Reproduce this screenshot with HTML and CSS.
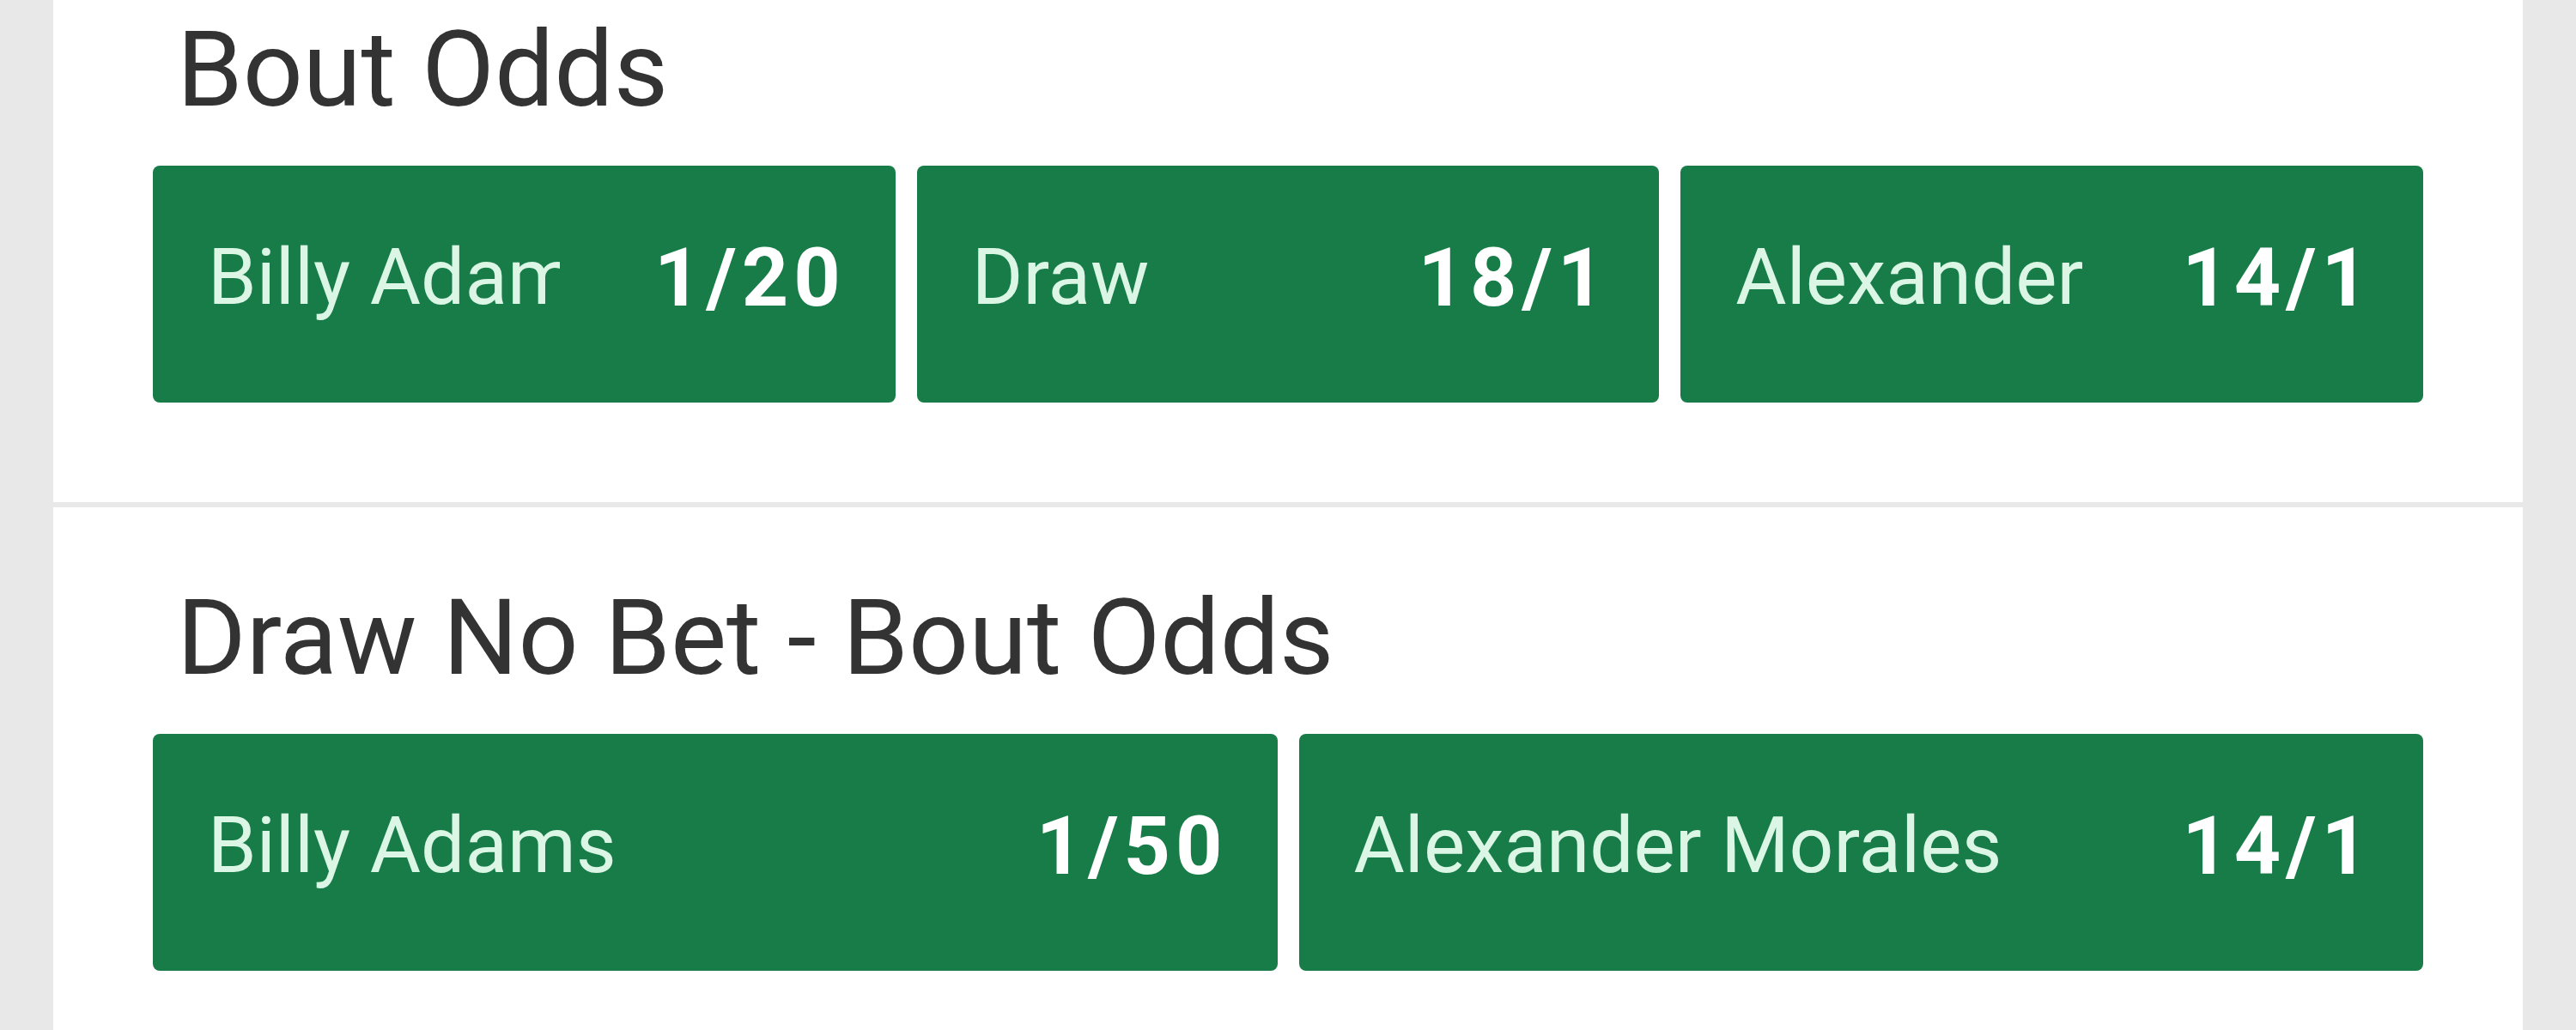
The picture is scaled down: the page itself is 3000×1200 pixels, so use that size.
FILE: index.html
```html
<!DOCTYPE html>
<html lang="en">
<head>
<meta charset="utf-8">
<title>Bout Odds</title>
<link rel="stylesheet" href="styles.css">
</head>
<body>
<main class="page">
  <section class="market market--first">
    <h2 class="market-title">Bout Odds</h2>
    <div class="selections selections--three">
      <button class="selection"><span class="selection-name">Billy Adams</span><span class="selection-odds">1/20</span></button>
      <button class="selection"><span class="selection-name">Draw</span><span class="selection-odds">18/1</span></button>
      <button class="selection"><span class="selection-name">Alexander Morales</span><span class="selection-odds">14/1</span></button>
    </div>
  </section>
  <section class="market">
    <h2 class="market-title">Draw No Bet - Bout Odds</h2>
    <div class="selections selections--two">
      <button class="selection"><span class="selection-name">Billy Adams</span><span class="selection-odds">1/50</span></button>
      <button class="selection"><span class="selection-name">Alexander Morales</span><span class="selection-odds">14/1</span></button>
    </div>
  </section>
</main>
</body>
</html>
```

FILE: styles.css
```css
html, body {
  margin: 0;
  padding: 0;
}

body {
  background: #e8e8e8;
  font-family: Roboto, "Noto Sans", "Liberation Sans", sans-serif;
}

.page {
  margin: 0 62px;
  display: flex;
  flex-direction: column;
  gap: 6px;
}

.market {
  background: #ffffff;
  padding: 79px 116px 116px;
}

.market--first {
  padding-top: 8px;
}

.market-title {
  margin: 0 0 39px 28px;
  font-size: 123px;
  line-height: 146px;
  font-weight: 400;
  color: #333333;
}

.selections {
  display: grid;
  gap: 25px;
}

.selections--three {
  grid-template-columns: repeat(3, 1fr);
}

.selections--two {
  grid-template-columns: repeat(2, 1fr);
}

.selection {
  display: flex;
  align-items: center;
  height: 276px;
  padding: 0 58px 16px 64px;
  border: none;
  border-radius: 8px;
  background: #177c48;
  font-family: inherit;
  text-align: left;
  min-width: 0;
  box-sizing: border-box;
}

.selection-name {
  flex: 1;
  min-width: 0;
  overflow: hidden;
  white-space: nowrap;
  font-size: 91px;
  color: #dcf6e6;
}

.selection-odds {
  margin-left: 110px;
  font-size: 95px;
  font-weight: 700;
  letter-spacing: 6px;
  color: #ffffff;
  white-space: nowrap;
}
```
